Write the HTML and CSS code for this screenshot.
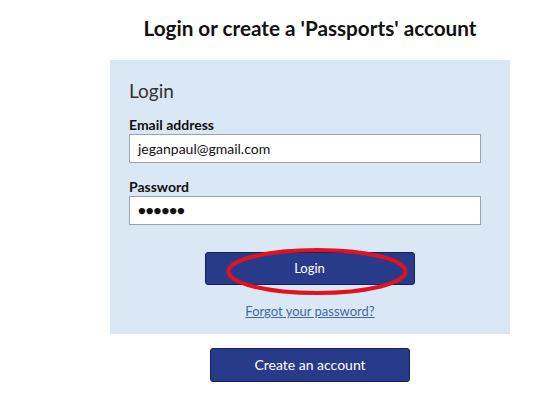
FILE: index.html
```
<!DOCTYPE html>
<html>
<head>
<meta charset="utf-8">
<link rel="stylesheet" href="styles.css">
</head>
<body>
<div class="wrap">
  <h1 class="title">Login or create a 'Passports' account</h1>
  <div class="panel">
    <h2 class="panel-title">Login</h2>
    <label class="label">Email address</label>
    <div class="input">jeganpaul@gmail.com</div>
    <label class="label label-pw">Password</label>
    <div class="input dots">&#9679;&#9679;&#9679;&#9679;&#9679;&#9679;</div>
    <div class="btn-row">
      <div class="btn-holder">
        <div class="btn btn-login">Login</div>
        <svg class="ring" width="182" height="49" viewBox="0 0 182 49"><ellipse cx="91" cy="24.5" rx="88.5" ry="21.5" fill="none" stroke="#e3121c" stroke-width="4"/></svg>
      </div>
    </div>
    <div class="forgot"><a href="#">Forgot your password?</a></div>
  </div>
  <div class="btn-row create-row">
    <div class="btn btn-create">Create an account</div>
  </div>
</div>
</body>
</html>
```
FILE: styles.css
```
html, body { margin: 0; padding: 0; background: #fff; }
body { font-family: "Lato", "Open Sans", sans-serif; color: #111; }
.wrap { width: 400px; margin-left: 110px; }
.title { margin: 0; height: 60px; box-sizing: border-box; padding-top: 16px; text-align: center; font-size: 20.7px; font-weight: 700; line-height: 25px; color: #111; white-space: nowrap; }
.panel { background: #dae8f5; height: 274px; box-sizing: border-box; padding: 18px 0 0 19px; }
.panel-title { margin: 0; font-size: 19px; font-weight: 400; line-height: 26px; color: #333; }
.label { display: block; margin-top: 13px; font-size: 14px; font-weight: 700; line-height: 16px; color: #111; }
.label-pw { margin-top: 16px; }
.input { width: 352px; height: 29px; box-sizing: border-box; border: 1px solid #9aa3ad; background: #fff; margin-top: 1px; padding: 0 8px; font-size: 14px; line-height: 27px; color: #111; }
.dots { font-size: 13px; letter-spacing: 0px; }
.btn-row { display: flex; justify-content: center; }
.panel .btn-row { margin-top: 27px; margin-left: -19px; }
.btn-holder { position: relative; margin-right: 1px; }
.btn { box-sizing: border-box; background: #283b8b; border: 1px solid #17225a; border-radius: 3px; color: #fff; text-align: center; font-size: 13px; }
.btn-login { width: 210px; height: 33px; line-height: 31px; }
.ring { position: absolute; left: 21px; top: -5px; }
.forgot { text-align: center; margin-top: 18px; margin-left: -19px; font-size: 13px; line-height: 16px; }
.forgot a { color: #3f6aa0; text-decoration: underline; }
.create-row { margin-top: 14px; }
.btn-create { width: 200px; height: 34px; line-height: 32px; font-size: 14px; }
```
